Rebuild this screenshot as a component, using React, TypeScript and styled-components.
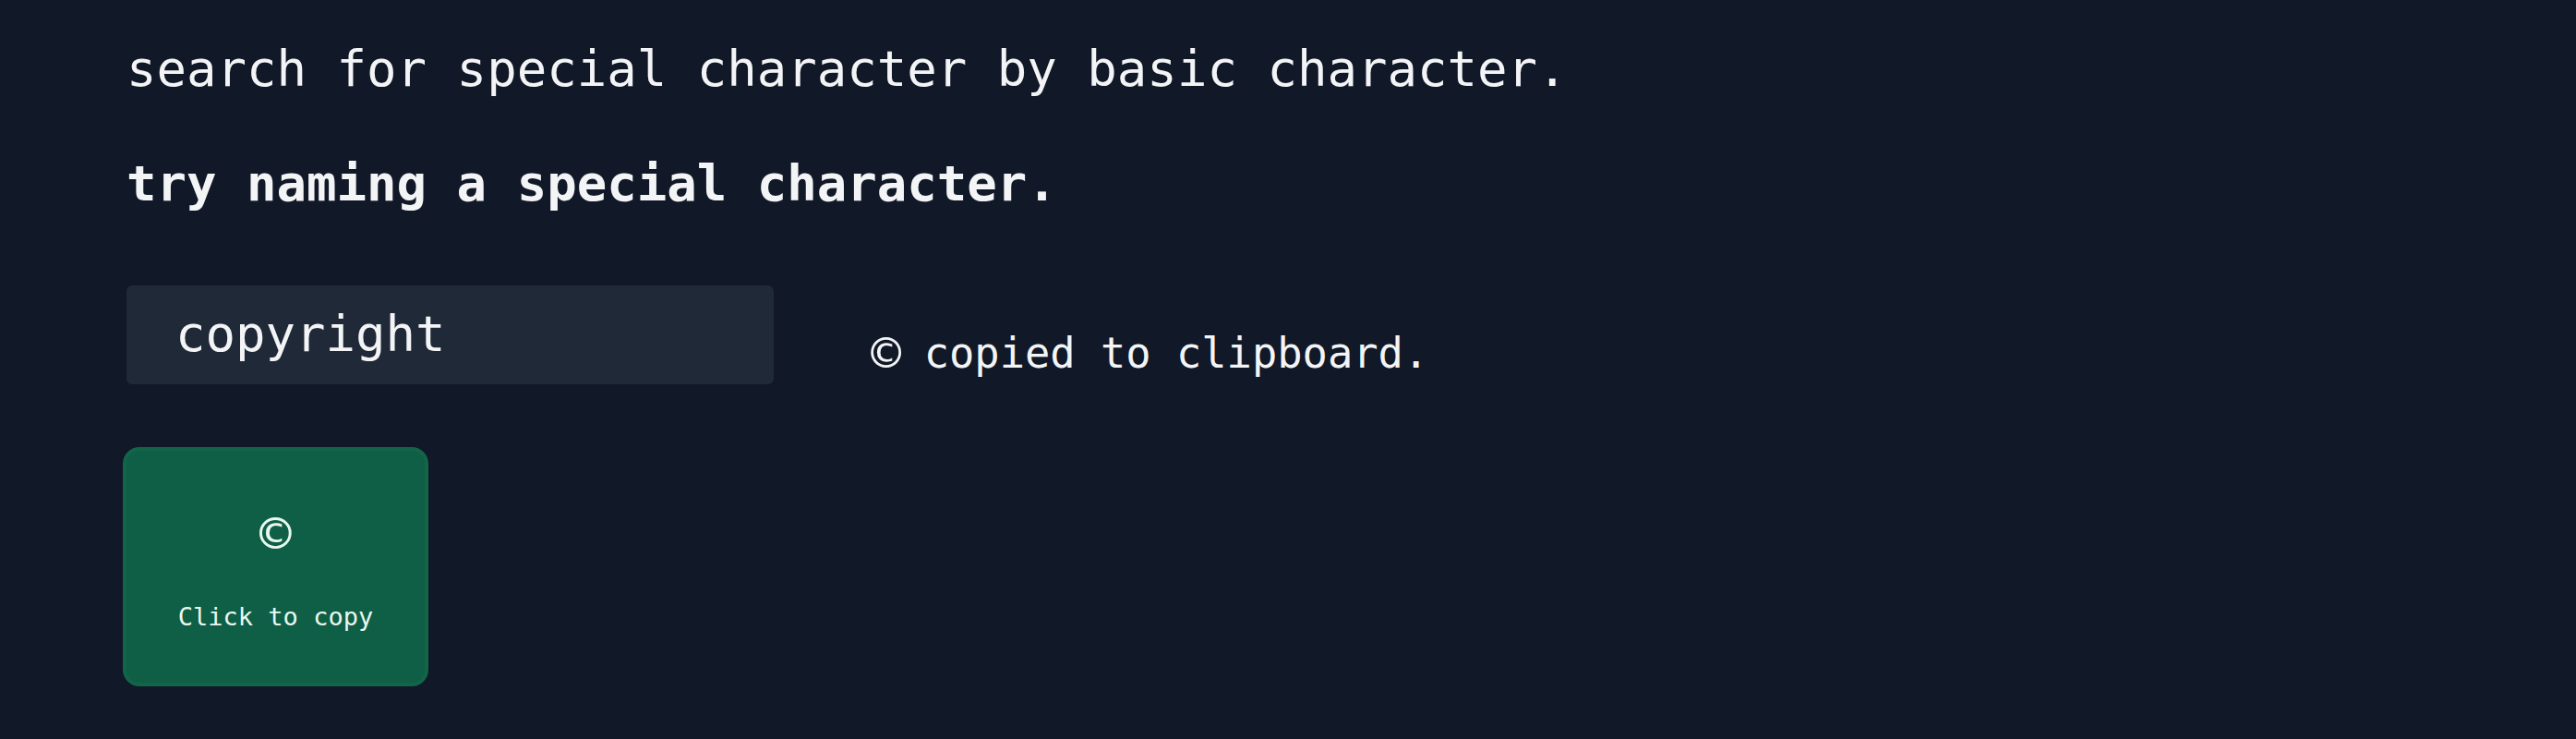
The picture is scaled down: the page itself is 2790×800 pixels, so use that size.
import React, { useState } from "react";
import styled, { createGlobalStyle } from "styled-components";

const GlobalStyle = createGlobalStyle`
  html, body {
    margin: 0;
    padding: 0;
    background: #111827;
  }
  body {
    font-family: "DejaVu Sans Mono", "Liberation Mono", monospace;
    color: #f3f4f6;
  }
  * { box-sizing: border-box; }
`;

const Page = styled.main`
  min-height: 800px;
  background: #111827;
  padding: 43px 0 0 137px;
  display: flex;
  flex-direction: column;
  align-items: flex-start;
`;

const Intro = styled.p`
  margin: 0;
  font-size: 54px;
  line-height: 63px;
  font-weight: 400;
  color: #f3f4f6;
  white-space: nowrap;
`;

const Prompt = styled.h2`
  margin: 61px 0 0;
  font-size: 54px;
  line-height: 63px;
  font-weight: 700;
  color: #f3f4f6;
  white-space: nowrap;
`;

const SearchRow = styled.div`
  margin-top: 79px;
  display: flex;
  align-items: flex-start;
  gap: 108px;
`;

const SearchInput = styled.input`
  width: 701px;
  height: 107px;
  padding: 0 24px 3px 53px;
  border: none;
  border-radius: 6px;
  background: #1f2937;
  color: #f3f4f6;
  font-family: "DejaVu Sans Mono", monospace;
  font-size: 54px;
  outline: none;
`;

const Status = styled.p`
  margin: 47px 0 0;
  font-size: 45.4px;
  line-height: normal;
  color: #f3f4f6;
  white-space: nowrap;
`;

const Symbol = styled.span`
  display: inline-block;
  transform: scale(1.2);
`;

const Results = styled.div`
  margin: 68px 0 0 -4px;
  display: flex;
  gap: 24px;
`;

const CharCard = styled.button<{ $copied: boolean }>`
  width: 331px;
  padding: 61px 0 56px;
  border: 4px solid ${(p) => (p.$copied ? "#136549" : "#374151")};
  border-radius: 18px;
  background: ${(p) => (p.$copied ? "#0e5f45" : "#1f2937")};
  display: flex;
  flex-direction: column;
  align-items: center;
  gap: 47px;
  cursor: pointer;
  font-family: "DejaVu Sans Mono", monospace;
  color: #eaf7f1;
`;

const Glyph = styled.span`
  font-size: 48px;
  line-height: normal;
  transform: scale(1.2);
`;

const Hint = styled.span`
  font-size: 27px;
  line-height: normal;
`;

export default function App() {
  const [query, setQuery] = useState("copyright");
  const [copied, setCopied] = useState(true);
  const symbol = "©";

  return (
    <>
      <GlobalStyle />
      <Page>
        <Intro>search for special character by basic character.</Intro>
        <Prompt>try naming a special character.</Prompt>
        <SearchRow>
          <SearchInput value={query} onChange={(e) => setQuery(e.target.value)} />
          {copied && (
            <Status>
              <Symbol>{symbol}</Symbol> copied to clipboard.
            </Status>
          )}
        </SearchRow>
        <Results>
          <CharCard $copied={copied} onClick={() => setCopied(true)}>
            <Glyph>{symbol}</Glyph>
            <Hint>Click to copy</Hint>
          </CharCard>
        </Results>
      </Page>
    </>
  );
}
